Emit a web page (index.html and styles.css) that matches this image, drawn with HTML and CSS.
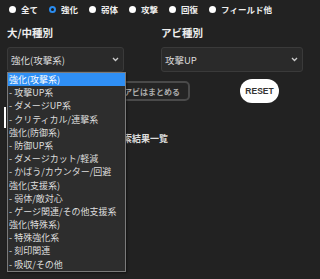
FILE: index.html
```html
<!DOCTYPE html>
<html lang="ja">

<head>
    <meta charset="UTF-8">
    <meta name="viewport" content="width=device-width, initial-scale=1.0">
    <title>アビ検索</title>
    <link rel="stylesheet" href="styles.css">
</head>

<body>
    <div class="filters">
        <label class="radio"><span class="dot"></span>全て</label>
        <label class="radio"><span class="dot checked"></span>強化</label>
        <label class="radio"><span class="dot"></span>弱体</label>
        <label class="radio"><span class="dot"></span>攻撃</label>
        <label class="radio"><span class="dot"></span>回復</label>
        <label class="radio"><span class="dot"></span>フィールド他</label>
    </div>

    <div class="selectors">
        <div class="field field-main">
            <div class="field-label">大/中種別</div>
            <div class="select">
                <span>強化(攻撃系)</span>
                <svg width="7" height="5" viewBox="0 0 7 5"><path d="M1 1 L3.5 3.5 L6 1" fill="none" stroke="#ccc" stroke-width="1.3"/></svg>
            </div>
            <ul class="dropdown">
                <li class="active">強化(攻撃系)</li>
                <li>- 攻撃UP系</li>
                <li>- ダメージUP系</li>
                <li>- クリティカル/連撃系</li>
                <li>強化(防御系)</li>
                <li>- 防御UP系</li>
                <li>- ダメージカット/軽減</li>
                <li>- かばう/カウンター/回避</li>
                <li>強化(支援系)</li>
                <li>- 弱体/敵対心</li>
                <li>- ゲージ関連/その他支援系</li>
                <li>強化(特殊系)</li>
                <li>- 特殊強化系</li>
                <li>- 刻印関連</li>
                <li>- 吸収/その他</li>
            </ul>
        </div>
        <div class="field field-sub">
            <div class="field-label">アビ種別</div>
            <div class="select">
                <span>攻撃UP</span>
                <svg width="7" height="5" viewBox="0 0 7 5"><path d="M1 1 L3.5 3.5 L6 1" fill="none" stroke="#ccc" stroke-width="1.3"/></svg>
            </div>
        </div>
    </div>

    <div class="actions">
        <button class="toggle">アビはまとめる</button>
        <button class="reset">RESET</button>
    </div>

    <div class="results">
        <div class="marker"></div>
        <h2>アビ検索結果一覧</h2>
    </div>
</body>

</html>
```

FILE: styles.css
```css
body {
    font-family: "Noto Sans CJK JP", "Noto Sans", sans-serif;
    margin: 0;
    padding: 0;
    background-color: #222;
    color: #eee;
    width: 320px;
    height: 279px;
    overflow: hidden;
}

.filters {
    display: flex;
    align-items: center;
    gap: 11px;
    height: 18px;
    padding-left: 9px;
    font-size: 8.5px;
    font-weight: bold;
}

.radio {
    display: flex;
    align-items: center;
    gap: 5px;
}

.dot {
    width: 7px;
    height: 7px;
    border-radius: 50%;
    background-color: #fff;
    box-sizing: border-box;
}

.dot.checked {
    background-color: #1a1a1a;
    border: 2px solid #2a8cf0;
}

.selectors {
    display: flex;
    gap: 37px;
    padding-left: 7px;
    margin-top: 9px;
}

.field {
    position: relative;
}

.field-main {
    width: 117px;
}

.field-sub {
    width: 142px;
}

.field-label {
    font-size: 10.5px;
    font-weight: bold;
    line-height: 12px;
    margin-bottom: 8px;
}

.select {
    display: flex;
    align-items: center;
    justify-content: space-between;
    height: 25px;
    padding: 0 4px 0 3px;
    background-color: #2a2a2a;
    border: 1px solid #3a3a3a;
    border-radius: 3px;
    box-sizing: border-box;
    font-size: 9.5px;
    color: #ddd;
}

.dropdown {
    position: absolute;
    left: 0;
    top: 45px;
    width: 117px;
    margin: 0;
    padding: 0;
    list-style: none;
    background-color: #2d2d2d;
    border: 1px solid #7a7a7a;
    box-shadow: 1px 1px 2px rgba(0, 0, 0, 0.5);
    font-size: 9px;
    color: #ddd;
    z-index: 5;
}

.dropdown li {
    height: 13.2px;
    line-height: 13.2px;
    padding-left: 1px;
    white-space: nowrap;
}

.dropdown li.active {
    background-color: #2f8ff5;
    color: #fff;
}

.actions {
    display: flex;
    align-items: center;
    gap: 50px;
    padding-left: 100px;
    margin-top: 7px;
}

.toggle {
    width: 90px;
    height: 20px;
    padding: 0 8px 0 0;
    background-color: #242424;
    border: 2px solid #4a4a4a;
    border-radius: 5px;
    color: #aaa;
    font-family: inherit;
    font-size: 8px;
    font-weight: bold;
    text-align: right;
}

.reset {
    width: 39px;
    height: 24px;
    padding: 0;
    background-color: #fff;
    border: none;
    border-radius: 12px;
    color: #333;
    font-family: "Liberation Sans", Arial, sans-serif;
    font-size: 8.5px;
    font-weight: bold;
}

.results {
    margin-top: 4px;
    padding-left: 4px;
}

.marker {
    width: 2px;
    height: 21px;
    background-color: #fff;
}

.results h2 {
    margin: 4px 0 0 4px;
    font-size: 9px;
    font-weight: bold;
    color: #ddd;
    padding-left: 88px;
}
```
